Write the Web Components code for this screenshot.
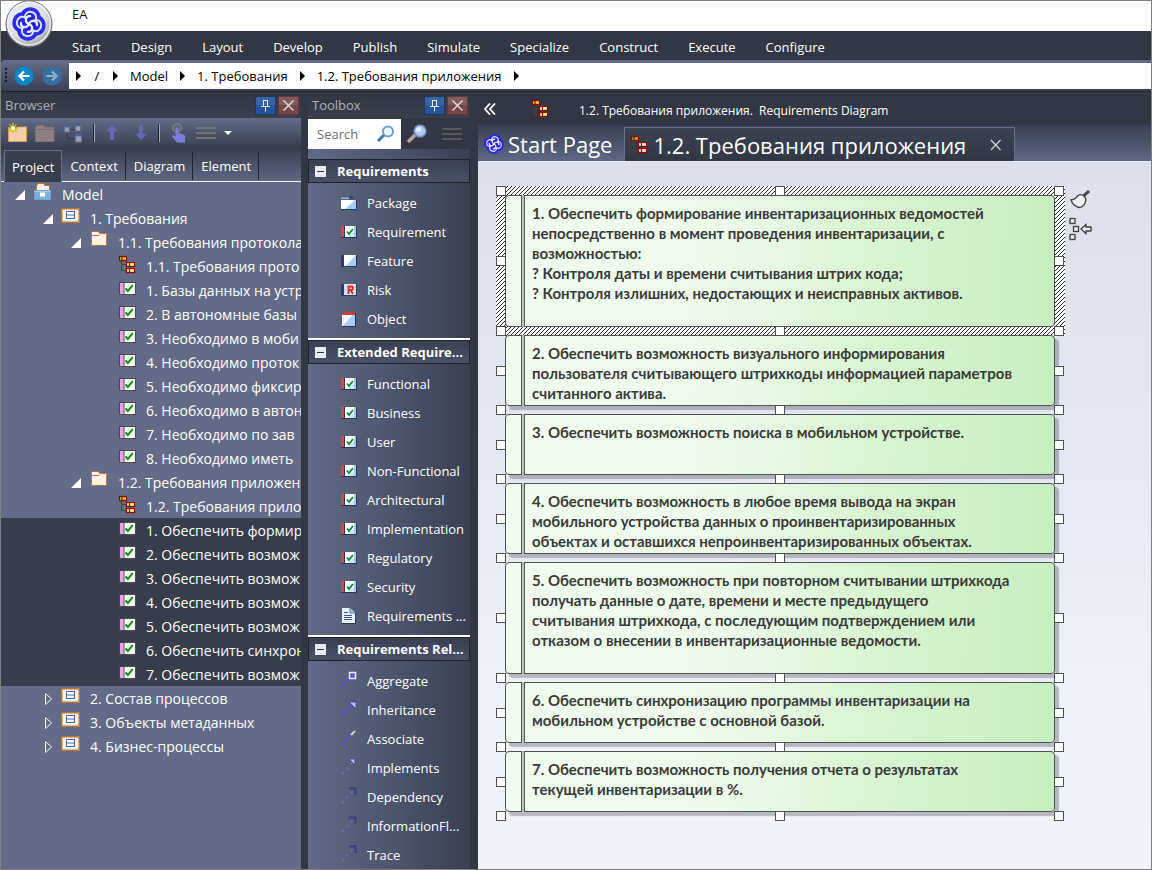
<!DOCTYPE html>
<html lang="ru">
<head>
<meta charset="utf-8">
<title>EA</title>
<style>
html,body{margin:0;height:100%}
body{font-family:"Open Sans","Noto Sans",sans-serif;font-size:13px;color:#fff;background:#323743}
</style>
</head>
<body>
<ea-app></ea-app>
<script>
const define=(name,css,html)=>{
  customElements.define(name,class extends HTMLElement{
    constructor(){super();this.attachShadow({mode:'open'});}
    connectedCallback(){
      const markup=typeof html==='function'?html(this):html;
      this.shadowRoot.innerHTML=`<style>*{box-sizing:border-box}button,input{font:inherit;color:inherit}button{border:0;padding:0;background:none;display:block}svg{display:block}${css}</style>${markup}`;
    }
  });
};

/* ---------- icons ---------- */
const turns=d=>[0,90,180,270].map(a=>`<path transform="rotate(${a})" d="${d}"/>`).join('');
const lobe='M-5.5 -5.5C-7.5 -14.5 7.5 -14.5 5.5 -5.5';
const knot=`<g fill="none" stroke-linecap="round" transform="rotate(12)"><circle r="10" fill="#1c1ce6"/><g stroke="#2a2ae8" stroke-width="9">${turns(lobe)}</g><g stroke="#dfe2fc" stroke-width="2">${turns(lobe)}</g><g stroke="#eceefe" stroke-width="2.2">${turns('M0 0C-5 -1 -5.5 -7.5 -.5 -8')}</g></g>`;
const boxTree=(a,b)=>`<path d="M4.500 6v9.500h5M4.500 9.500h5" fill="none" stroke="#4a4436"/><g stroke="#8a0808" stroke-width="1.200"><rect x="2.500" y="1.500" width="7" height="4" fill="${a}"/><rect x="9.500" y="7.500" width="8" height="4" fill="${b}"/><rect x="9.500" y="13.500" width="8" height="4" fill="${b}"/><path d="M5 1.500v4M12.500 7.500v4M12.500 13.500v4"/></g>`;
const arrowLine=d=>`<path d="M2 17L13 5" stroke="${d?'#6b68b8':'#5553c4'}" stroke-width="2" ${d?'stroke-dasharray="2.5 4"':''}/>`;
const ICONS={
 logo:[48,48,`<defs><radialGradient id="m" cx=".4" cy=".35" r=".7"><stop offset="0" stop-color="#f4f4f6"/><stop offset=".7" stop-color="#dcdee2"/><stop offset="1" stop-color="#9b9ea5"/></radialGradient></defs><circle cx="24" cy="24" r="23" fill="#8f939b" stroke="#666a73"/><circle cx="24" cy="23.500" r="21.500" fill="url(#m)" stroke="#f2f2f4" stroke-width="1.500"/><g transform="translate(24 24)">${knot}</g>`],
 knot:[20,20,`<g transform="translate(10 10) scale(.6)">${knot}</g>`],
 model:[20,24,`<path d="M3.500 9V3.500l2-2h6v2h5V9z" fill="#fff0e6" stroke="#b87838"/><rect x="1.500" y="8.500" width="16" height="9" fill="#7fb0dd" stroke="#6fa0cf"/><path d="M1.500 9.500h16" stroke="#a9cdec"/><rect x="7" y="10.500" width="5" height="4" fill="#fff"/>`],
 view:[20,24,`<rect x=".75" y="2.750" width="17.500" height="13.500" fill="#fff0e8" stroke="#b07c3e" stroke-width="1.500"/><rect x="5.500" y="5.500" width="8" height="7" fill="#fff" stroke="#3c63c4"/><path d="M5.500 9h8" stroke="#3c63c4"/>`],
 folder:[20,24,`<path d="M2.500 15.500v-13l1-1h6l1 2h7v12z" fill="#fff0ea" stroke="#b07c3e"/><path d="M2.500 5.500h8" stroke="#b07c3e"/>`],
 diagram:[20,24,`<g transform="translate(0 1)">${boxTree('#d8c818','#fff480')}</g>`],
 req:[20,24,`<rect x="2.500" y="4.500" width="16" height="12" fill="#effff0" stroke="#484848"/><rect x="3" y="5" width="3.500" height="11" fill="#f0a0f0"/><path d="M7 4.500v12" stroke="#484848"/><path d="M8.500 10.500l2.300 2.700 5-6" fill="none" stroke="#0a820a" stroke-width="1.800"/>`],
 smallDiagram:[20,20,boxTree('#e6d820','#fff68a')],
 tabDiagram:[20,20,boxTree('#c0a020','#f6e8dc')],
 pin:[21,19,`<rect x=".5" y=".5" width="20" height="18" fill="#25549a" stroke="#22365c"/><rect x="1" y="1" width="19" height="8" fill="#3f6ba8" opacity=".7"/><path d="M8 4.500h5M8.500 4.500v6M12.500 4.500v6M6 10.500h9M10.500 10.500v5" fill="none" stroke="#e8ecf4"/>`],
 close:[21,19,`<rect x=".5" y=".5" width="20" height="18" fill="#754847" stroke="#5a3a3c"/><rect x="1" y="1" width="19" height="8" fill="#8a6462" opacity=".7"/><path d="M5.500 4.500l10 10M15.500 4.500l-10 10" stroke="#e6e2e4" stroke-width="1.300"/>`],
 newFolder:[20,20,`<path d="M1.500 18.500v-13h7l2-1.500h9v14.500z" fill="#f3ceaa" stroke="#d99b54"/><path d="M6 0v10M1 5h10M2.500 1.500l7 7M9.500 1.500l-7 7" stroke="#c9bb12" stroke-width="1.500"/><circle cx="6" cy="5" r="2" fill="#fffce0"/>`],
 dimFolder:[20,20,`<path d="M.5 18.500V4.500l2-2h6l1.500 2h9v14z" fill="#8d8084" stroke="#82736f"/><path d="M.5 6.500h18" stroke="#7c6c68"/>`],
 hierarchy:[20,20,`<path d="M7 6.500h5M4.500 8v7.500h7" fill="none" stroke="#2e3a55"/><g fill="#9aa0ad" stroke="#6a7183"><rect x="1.500" y="4" width="5" height="5"/><rect x="12.500" y="3" width="5" height="5"/><rect x="12.500" y="13" width="6" height="6"/></g><path d="M0 3h7M12 1.500h6M12 11.500h7" stroke="#4a5fa6" stroke-width="2"/>`],
 up:[14,16,`<path d="M7 0l6 6.500H9V15H5V6.500H1z" fill="#6468b0"/>`],
 down:[14,16,`<path d="M7 15l6-6.500H9V0H5v8.500H1z" fill="#6468b0"/>`],
 hand:[18,20,`<circle cx="7" cy="5" r="4" fill="none" stroke="#77777f" stroke-width="2.200"/><path d="M5.500 5q1.500-1.500 3 0v5l5 1.500q2.500 1 1.500 4v4H7l-5-6q0-2 2-1l1.500 1z" fill="#7d7fd6"/>`],
 lines:[20,14,`<path d="M0 2h20M0 7h20M0 12h20" stroke="#72736f" stroke-width="2"/>`],
 dimLines:[20,14,`<path d="M0 2h20M0 7h20M0 12h20" stroke="#555759" stroke-width="2"/>`],
 caret:[8,6,`<path d="M0 1h8L4 5z" fill="#fff"/>`],
 back:[20,20,`<circle cx="10" cy="10" r="9.700" fill="#0d86c4"/><path d="M15.500 10H6M10 5.500L5.500 10l4.500 4.500" fill="none" stroke="#fff" stroke-width="2.200"/>`],
 forward:[20,20,`<circle cx="10" cy="10" r="9.700" fill="#356f9d"/><path d="M4.500 10H14M10 5.500l4.500 4.500-4.500 4.500" fill="none" stroke="#8fb0cc" stroke-width="2.200"/>`],
 grip:[3,15,`<path d="M1 0v15" stroke="#171a22" stroke-width="2" stroke-dasharray="2 2"/>`],
 search:[20,18,`<path d="M2 16l6-6" stroke="#3f74aa" stroke-width="3"/><circle cx="12" cy="6.500" r="5" fill="#f2f8ff" stroke="#6c9dcb" stroke-width="2"/>`],
 find:[20,20,`<path d="M1 18l7-7" stroke="#b8a49a" stroke-width="3.500"/><circle cx="13" cy="7" r="5.800" fill="#a9cdf4" stroke="#7c93c4" stroke-width="1.500"/><circle cx="11.500" cy="5.500" r="2.500" fill="#e4f2ff"/>`],
 minus:[11,11,`<rect width="11" height="11" fill="#e9eaee"/><path d="M2 5.500h7" stroke="#28345c"/>`],
 tPackage:[18,16,`<path d="M1 2.500h8V4H1z" fill="#9fb4dc"/><path d="M9 1.500h4V4H9z" fill="#2c4580"/><rect x="1" y="5" width="15" height="9" fill="#a9cdf2"/><path d="M1 5h14L5 14H1z" fill="#fff"/><path d="M1 14.500h15.500V5" fill="none" stroke="#27365f"/>`],
 tReq:[18,16,`<rect x="1" y="2" width="15" height="11" fill="#a9cdf2"/><path d="M4 2h10v11H4z" fill="#fff"/><path d="M14 8v5H8z" fill="#cfe2f6"/><rect x="1" y="2" width="3" height="11" fill="#cf4a4c"/><path d="M4.500 2v11" stroke="#27365f"/><path d="M7 7.500l2 2.500 4-5" fill="none" stroke="#0a8a3a" stroke-width="1.800"/><path d="M1 13.500h15.500V2" fill="none" stroke="#27365f"/>`],
 tFeature:[18,16,`<rect x="1" y="2" width="15" height="11" fill="#a9cdf2"/><path d="M4 2h12L6 13H4z" fill="#fff"/><rect x="1" y="2" width="3" height="11" fill="#34386e"/><path d="M1 13.500h15.500V2" fill="none" stroke="#27365f"/>`],
 tRisk:[18,16,`<rect x="1" y="2" width="15" height="11" fill="#cfe2f8"/><rect x="1" y="2" width="3" height="11" fill="#34386e"/><path d="M8.500 12V4.500h3q1.500 0 1.500 1.700T11.500 8h-3M10.500 8l2.500 4" fill="none" stroke="#e8281e" stroke-width="1.800"/><path d="M1 13.500h15.500V2" fill="none" stroke="#27365f"/>`],
 tObject:[18,16,`<rect x="2" y="1" width="13" height="14" fill="#a9cdf2"/><path d="M2 1h13L3 15H2z" fill="#fff"/><rect x="2" y="1" width="13" height="3" fill="#d03c3c"/><path d="M2 15.500h13.500V2" fill="none" stroke="#27365f"/>`],
 tDoc:[18,18,`<path d="M2 1h8l5 5v10H2z" fill="#eaf2fd"/><path d="M10 1v5h5" fill="#a9c4ea" stroke="#5a74a8"/><path d="M4 5.500h4M4 8.500h8M4 10.500h8M4 12.500h8" stroke="#42598c"/><path d="M2 16.500h13.500V6" fill="none" stroke="#27365f"/>`],
 tAggregate:[18,22,`<path d="M1 17L9 8" stroke="#5553c4" stroke-width="2.200"/><rect x="9.500" y="2.500" width="6" height="6" fill="#5a58d8" stroke="#e8eaff" stroke-width="1.500"/>`],
 tInherit:[18,22,`${arrowLine(0)}<path d="M9 3h7v7z" fill="#b8bce0" stroke="#4a4a9c"/>`],
 tAssoc:[18,22,`${arrowLine(0)}<path d="M11 7l4-4" stroke="#c9d4d8" stroke-width="2.200"/>`],
 tImpl:[18,22,`${arrowLine(1)}<path d="M9 2h6v6z" fill="#b8bce0" stroke="#4a4a9c"/>`],
 tDep:[18,22,`${arrowLine(1)}<path d="M9 2.500h6.500V9" fill="none" stroke="#3c3c80" stroke-width="1.800"/>`],
 chevrons:[12,12,`<path d="M6 .5L1 6l5 5.500M11 .5L6 6l5 5.500" fill="none" stroke="#fff" stroke-width="1.800"/>`],
 x:[12,12,`<path d="M1 1l9.500 10M10.500 1L1 11" stroke="#d4d7de" stroke-width="1.200"/>`],
 brush:[24,22,`<path d="M2 11q5-1 6-3.500Q11 4 15 7q3 3 1 7-2 4.500-6 4.500Q4 17 2 11z" fill="#f1f1f1" stroke="#404040" stroke-width="1.300"/><path d="M14.500 7L20 2" stroke="#404040" stroke-width="3"/>`],
 nest:[24,24,`<g fill="#e8e8e8" stroke="#404040" stroke-width="1.300"><rect x="1" y="1.500" width="5" height="5"/><rect x="4.500" y="9.500" width="5" height="5"/><rect x="1" y="17.500" width="5" height="5"/><path d="M12 12l5-4.500v2.500h5v4h-5v2.500z"/></g>`]
};
define('ea-icon',':host{display:block;flex:none}',el=>{
  const [w,h,body]=ICONS[el.getAttribute('name')];
  return `<svg width="${w}" height="${h}" viewBox="0 0 ${w} ${h}" aria-hidden="true">${body}</svg>`;
});

/* ---------- top bars ---------- */
define('ea-title-bar',`
 :host{display:block;background:#fff;height:30px;position:relative;color:#111}
 span{display:block;padding-left:71px;line-height:26px}
 ea-icon{position:absolute;left:4px;top:-1px;z-index:2}`,
 `<span><slot></slot></span><ea-icon name="logo"></ea-icon>`);

define('ea-menu',`
 :host{display:block;background:#323743}
 nav{display:flex;gap:30px;height:29px;padding-left:71px}
 a{color:#fff;text-decoration:none;line-height:32px}`,
 el=>`<nav>${el.getAttribute('items').split(',').map(t=>`<a href="#">${t}</a>`).join('')}</nav>`);

define('ea-path-bar',`
 :host{display:flex;align-items:center;height:32px;padding-left:4px;border-bottom:1px solid #1e222b;border-top-left-radius:4px;
   background:linear-gradient(#646c88,#3a4051)}
 button+button{margin-left:8px}
 ea-icon[name=grip]{margin-right:6px}
 nav{flex:1;display:flex;align-items:center;gap:12px;margin-left:7px;padding-left:7px;height:26px;background:#fff;color:#000}
 a{color:#000;text-decoration:none}
 i{border:5px solid transparent;border-left-color:#000;border-right:0}
 .root{width:8px;text-align:center}`,
 `<ea-icon name="grip"></ea-icon>
  <button aria-label="Back"><ea-icon name="back"></ea-icon></button>
  <button aria-label="Forward"><ea-icon name="forward"></ea-icon></button>
  <nav><i></i><a class="root" href="#">/</a><i></i><a href="#">Model</a><i></i><a href="#">1. Требования</a><i></i><a href="#">1.2. Требования приложения</a><i></i></nav>`);

/* ---------- dock panel ---------- */
define('ea-panel',`
 :host{display:flex;flex-direction:column;min-width:0;min-height:0;overflow:hidden}
 header{display:flex;align-items:center;gap:2px;height:26px;padding:0 2px 0 4px;background:linear-gradient(#323743,#3a3f4b);color:#a9aeb8}
 h2{flex:1;margin:0;font-size:13px;font-weight:400}`,
 el=>`<header><h2>${el.getAttribute('heading')}</h2><button aria-label="Pin"><ea-icon name="pin"></ea-icon></button><button aria-label="Close"><ea-icon name="close"></ea-icon></button></header><slot></slot>`);

define('ea-browser-tools',`
 :host{display:flex;align-items:center;height:30px;padding-left:6px;background:linear-gradient(#636b87,#383e4d)}
 .sep{width:2px;height:18px;margin:0 10px;border-left:1px solid #20242e;border-right:1px solid #a2a8ba}
 .gap{margin-left:8px}.wide{margin-left:15px}`,
 `<button aria-label="New package"><ea-icon name="newFolder"></ea-icon></button>
  <button class="gap" aria-label="Folder"><ea-icon name="dimFolder"></ea-icon></button>
  <button class="gap" aria-label="Structure"><ea-icon name="hierarchy"></ea-icon></button>
  <span class="sep"></span>
  <button aria-label="Up"><ea-icon name="up"></ea-icon></button>
  <button class="wide" aria-label="Down"><ea-icon name="down"></ea-icon></button>
  <span class="sep"></span>
  <button aria-label="Select"><ea-icon name="hand"></ea-icon></button>
  <button class="gap" aria-label="Menu"><ea-icon name="lines"></ea-icon></button>
  <button class="gap" aria-label="More"><ea-icon name="caret"></ea-icon></button>`);

define('ea-browser-tabs',`
 :host{display:flex;align-items:flex-end;height:34px;padding-left:3px;border-bottom:1px solid #f4f5f8;background:linear-gradient(#383e4d,#5f6783)}
 button{height:28px;padding:0 7px 0 8px;margin-bottom:1px;border-right:1px solid #20242e}
 button.on{height:32px;padding:0 7px;margin-bottom:-1px;border:1px solid #66708e;border-bottom:0;background:#383e4c}`,
 `<button class="on">Project</button><button>Context</button><button>Diagram</button><button>Element</button>`);

define('ea-tree-row',`
 :host{display:flex;align-items:center;height:24px;font-size:14px;white-space:nowrap;overflow:hidden;padding-left:calc(14px + 28px*var(--level,0))}
 :host([selected]){background:#383d4c}
 svg{flex:none;margin-right:8px}
 ea-icon{margin-right:9px}
 span{line-height:24px;padding-top:2px}`,
 el=>{
  el.style.setProperty('--level',el.getAttribute('level')||0);
  const s=el.getAttribute('state');
  const mark=s==='open'?'<path d="M10 8v10H0z" fill="#fff"/>':s==='closed'?'<path d="M2.500 7.500l6 5.500-6 5.500z" fill="none" stroke="#fff"/>':'';
  return `<svg width="10" height="24" aria-hidden="true">${mark}</svg><ea-icon name="${el.getAttribute('icon')}"></ea-icon><span><slot></slot></span>`;
 });

define('ea-tree',`
 :host{display:block;flex:1;min-height:0;background:#636b87;overflow:hidden}`,`<slot></slot>`);

/* ---------- toolbox ---------- */
define('ea-search-row',`
 :host{display:flex;align-items:center;height:31px;background:#323743}
 label{display:flex;align-items:center;width:93px;height:30px;padding:0 5px 0 9px;background:#fff}
 input{flex:1;min-width:0;width:20px;border:0;padding:0;outline:0;background:none;color:#555}
 input::placeholder{color:#6c6c6c;opacity:1}
 .find{margin-left:6px}.menu{margin-left:15px}`,
 `<label><input placeholder="Search" aria-label="Search"><ea-icon name="search"></ea-icon></label>
  <button class="find" aria-label="Find"><ea-icon name="find"></ea-icon></button>
  <button class="menu" aria-label="Menu"><ea-icon name="dimLines"></ea-icon></button>`);

define('ea-tool-list',`
 :host{display:block;flex:1;min-height:0;overflow:hidden;padding-top:10px;background:linear-gradient(90deg,#616985,#505870 45%,#3a4050)}`,`<slot></slot>`);

define('ea-category',`
 :host{display:block}
 :host(:not(:first-child)){border-top:2px solid #fff}
 h3{margin:0;font-size:13px}
 button{display:flex;align-items:center;width:100%;height:24px;padding:0 2px 0 6px;font-weight:700;white-space:nowrap;border:1px solid #1f232b;background:linear-gradient(#3a4051,#4a5166)}
 ea-icon{margin-right:11px}
 .items{padding:5px 0}
 :host(:last-child) .items{padding-bottom:0}`,
 el=>`<h3><button><ea-icon name="minus"></ea-icon>${el.getAttribute('heading')}</button></h3><div class="items"><slot></slot></div>`);

define('ea-tool',`
 :host{display:flex;align-items:center;height:29px;padding-left:32px;white-space:nowrap}
 ea-icon{margin-right:9px}`,
 el=>`<ea-icon name="${el.getAttribute('icon')}"></ea-icon><span><slot></slot></span>`);

/* ---------- diagram ---------- */
define('ea-diagram-head',`
 :host{display:flex;align-items:center;height:33px;padding-left:6px;background:#323743;font-size:12px;white-space:pre}
 .kind{margin:0 29px 0 34px}
 span{padding-top:4px}`,
 `<button aria-label="Collapse"><ea-icon name="chevrons"></ea-icon></button><ea-icon class="kind" name="smallDiagram"></ea-icon><span><slot></slot></span>`);

define('ea-diagram-tabs',`
 :host{display:flex;align-items:flex-end;height:37px;padding-left:6px;font-size:22px;border-bottom:1px solid #e8eaf2;background:linear-gradient(#3a4051,#606885)}
 .tab{display:flex;align-items:center;gap:4px;height:34px;white-space:nowrap}
 .tab>button{line-height:36px}
 .on{margin-left:12px;padding:0 12px 0 4px;border:1px solid #66708e;border-bottom:0;background:linear-gradient(#3c4251,#323743)}
 .on button+button{margin-left:20px}`,
 `<div class="tab"><ea-icon name="knot"></ea-icon><button>Start Page</button></div>
  <div class="tab on"><ea-icon name="tabDiagram"></ea-icon><button>1.2. Требования приложения</button><button aria-label="Close"><ea-icon name="x"></ea-icon></button></div>`);

define('ea-canvas',`
 :host{display:flex;flex-direction:column;gap:8px;flex:1;min-height:0;padding:33px 27px;background:linear-gradient(#dce0ec,#e5e8f2 45%,#f1f2f8 80%,#f2f3f8)}`,`<slot></slot>`);

define('ea-node',`
 :host{display:block;flex:none;position:relative;width:550px;color:#3a3a3a}
 .card{position:absolute;inset:0;border:1px solid #505450;border-radius:4px;background:linear-gradient(92deg,#f1fbf0,#effaed 38%,#daf3d4 65%,#c9edc2);box-shadow:4px 4px 1px rgba(60,60,70,.32)}
 :host([focused]) .card{box-shadow:none}
 .bar{position:absolute;top:0;bottom:0;left:16px;width:4px;border:solid #555955;border-width:0 1px;background:#b9c4b8}
 .text{position:relative;padding:8px 8px 8px 27px;font:700 15px/20px Lato,"Open Sans",sans-serif;white-space:pre-line}
 .hatch{position:absolute;left:-9px;top:-9px;width:calc(100% + 19px);height:calc(100% + 18px)}
 .h{position:absolute;width:10px;height:10px;background:#fff;border:1px solid #505050}
 .actions{position:absolute;left:calc(100% + 14px);top:-6px;display:grid;gap:6px}`,
 el=>{
  const focused=el.hasAttribute('focused');
  const at=['-9px','calc(50% - 5px)','calc(100% - 1px)'];
  let handles='';
  at.forEach((y,j)=>at.forEach((x,i)=>{if(i!==1||j!==1)handles+=`<i class="h" style="left:${x};top:${y}"></i>`;}));
  const hatch=focused?`<svg class="hatch" aria-hidden="true" shape-rendering="crispEdges"><defs><pattern id="p" width="4" height="4" patternUnits="userSpaceOnUse"><rect width="4" height="4" fill="#fff"/><path d="M0 3h1v1H0zM1 2h1v1H1zM2 1h1v1H2zM3 0h1v1H3z" fill="#2a2a2a"/></pattern></defs><rect width="100%" height="100%" fill="url(#p)"/></svg>`:'';
  const actions=focused?`<div class="actions"><button aria-label="Format"><ea-icon name="brush"></ea-icon></button><button aria-label="Link"><ea-icon name="nest"></ea-icon></button></div>`:'';
  return `${hatch}<div class="card"></div><div class="bar"></div><div class="text"><slot></slot></div>${handles}${actions}`;
 });

/* ---------- application ---------- */
const row=(level,icon,text,extra='')=>`<ea-tree-row level="${level}" icon="${icon}" ${extra}>${text}</ea-tree-row>`;
const tools=list=>list.map(([icon,text])=>`<ea-tool icon="${icon}">${text}</ea-tool>`).join('');
const open='state="open"',closed='state="closed"';
define('ea-app',`
 :host{display:flex;flex-direction:column;height:100vh;border:1px solid #808080;background:#323743;overflow:hidden;box-sizing:border-box}
 .work{flex:1;min-height:0;display:grid;grid-template-columns:300px 162px minmax(0,1fr);grid-template-rows:minmax(0,1fr);column-gap:7px}
 main{display:flex;flex-direction:column;min-width:0;margin-left:1px}`,
 `<ea-title-bar>EA</ea-title-bar>
  <ea-menu items="Start,Design,Layout,Develop,Publish,Simulate,Specialize,Construct,Execute,Configure"></ea-menu>
  <ea-path-bar></ea-path-bar>
  <div class="work">
   <ea-panel heading="Browser">
    <ea-browser-tools></ea-browser-tools><ea-browser-tabs></ea-browser-tabs>
    <ea-tree>${[
      row(0,'model','Model',open),row(1,'view','1. Требования',open),row(2,'folder','1.1. Требования протокола',open),
      row(3,'diagram','1.1. Требования прото'),
      ...['1. Базы данных на устр','2. В автономные базы','3. Необходимо в моби','4. Необходимо проток','5. Необходимо фиксир','6. Необходимо в автон','7. Необходимо по зав','8. Необходимо иметь'].map(t=>row(3,'req',t)),
      row(2,'folder','1.2. Требования приложен',open),row(3,'diagram','1.2. Требования прило'),
      ...['1. Обеспечить формир','2. Обеспечить возмож','3. Обеспечить возмож','4. Обеспечить возмож','5. Обеспечить возмож','6. Обеспечить синхрон','7. Обеспечить возмож'].map(t=>row(3,'req',t,'selected')),
      row(1,'view','2. Состав процессов',closed),row(1,'view','3. Объекты метаданных',closed),row(1,'view','4. Бизнес-процессы',closed)
    ].join('')}</ea-tree>
   </ea-panel>
   <ea-panel heading="Toolbox">
    <ea-search-row></ea-search-row>
    <ea-tool-list>
     <ea-category heading="Requirements">${tools([['tPackage','Package'],['tReq','Requirement'],['tFeature','Feature'],['tRisk','Risk'],['tObject','Object']])}</ea-category>
     <ea-category heading="Extended Require...">${tools([...['Functional','Business','User','Non-Functional','Architectural','Implementation','Regulatory','Security'].map(t=>['tReq',t]),['tDoc','Requirements ...']])}</ea-category>
     <ea-category heading="Requirements Rel...">${tools([['tAggregate','Aggregate'],['tInherit','Inheritance'],['tAssoc','Associate'],['tImpl','Implements'],['tDep','Dependency'],['tDep','InformationFl...'],['tDep','Trace']])}</ea-category>
    </ea-tool-list>
   </ea-panel>
   <main>
    <ea-diagram-head>1.2. Требования приложения.  Requirements Diagram</ea-diagram-head>
    <ea-diagram-tabs></ea-diagram-tabs>
    <ea-canvas>${[
      [132,'1. Обеспечить формирование инвентаризационных ведомостей\nнепосредственно в момент проведения инвентаризации, с\nвозможностью:\n? Контроля даты и времени считывания штрих кода;\n? Контроля излишних, недостающих и неисправных активов.'],
      [71,'2. Обеспечить возможность визуального информирования\nпользователя считывающего штрихкоды информацией параметров\nсчитанного актива.'],
      [61,'3. Обеспечить возможность поиска в мобильном устройстве.'],
      [71,'4. Обеспечить возможность в любое время вывода на экран\nмобильного устройства данных о проинвентаризированных\nобъектах и оставшихся непроинвентаризированных объектах.'],
      [112,'5. Обеспечить возможность при повторном считывании штрихкода\nполучать данные о дате, времени и месте предыдущего\nсчитывания штрихкода, с последующим подтверждением или\nотказом о внесении в инвентаризационные ведомости.'],
      [61,'6. Обеспечить синхронизацию программы инвентаризации на\nмобильном устройстве с основной базой.'],
      [61,'7. Обеспечить возможность получения отчета о результатах\nтекущей инвентаризации в %.']
    ].map(([h,t],i)=>`<ea-node ${i?'':'focused'} style="height:${h}px">${t}</ea-node>`).join('')}</ea-canvas>
   </main>
  </div>`);
</script>
</body>
</html>
